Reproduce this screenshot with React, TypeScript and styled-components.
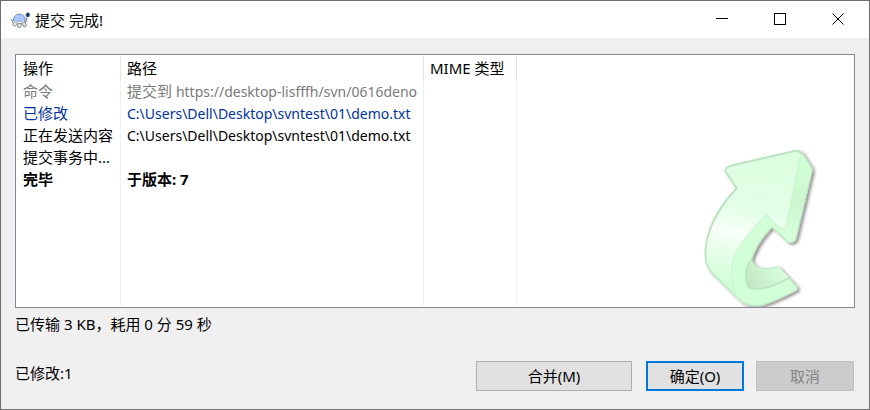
import React from "react";
import styled, { createGlobalStyle, css } from "styled-components";

const GlobalStyle = createGlobalStyle`
  * { box-sizing: border-box; }
  body {
    margin: 0;
    background: #f0f0f0;
    color: #000;
    font: 15px/22px "Noto Sans", "Noto Sans CJK SC", sans-serif;
  }
`;

const Window = styled.div`
  display: flex;
  flex-direction: column;
  min-height: 100vh;
  border: 1px solid #6e6e6f;
  background: #f0f0f0;
`;

const TitleBar = styled.header`
  display: flex;
  align-items: center;
  height: 37px;
  padding: 0 2px 0 9px;
  background: #fff;
`;

const Title = styled.h1`
  flex: 1;
  margin: 0 0 0 4px;
  font-size: 15px;
  font-weight: 400;
`;

const CaptionButton = styled.button`
  display: flex;
  align-items: center;
  justify-content: center;
  width: 58px;
  height: 35px;
  padding: 0 0 2px;
  border: 0;
  background: transparent;
`;

const Content = styled.main`
  display: flex;
  flex: 1;
  flex-direction: column;
  padding: 16px 14px 18px;
`;

const LogPanel = styled.section`
  position: relative;
  display: flex;
  flex: 1;
  padding: 1px 0;
  border: 1px solid #828790;
  background: #fff;
`;

const Watermark = styled.svg`
  position: absolute;
  right: 0;
  bottom: 0;
`;

const LogTable = styled.table`
  position: relative;
  width: 100%;
  table-layout: fixed;
  border-collapse: separate;
  border-spacing: 0;
`;

const Column = styled.col<{ $width?: number }>`
  ${({ $width }) => $width && css`width: ${$width}px;`}
`;

const HeadCell = styled.th`
  height: 24px;
  padding: 0 6px;
  border-right: 1px solid #e5e5e5;
  font-weight: 400;
  text-align: left;
  white-space: nowrap;
  &:first-child { padding-left: 7px; }
  &:last-child { border-right: 0; }
`;

type Tone = "muted" | "modified" | "plain" | "done";

const tones = {
  muted: css`color: #7a7a7a;`,
  modified: css`color: #0032a0;`,
  plain: css`color: #000;`,
  done: css`color: #000; font-weight: 700;`,
};

const Row = styled.tr<{ $tone: Tone }>`
  height: 22px;
  ${({ $tone }) => tones[$tone]}
`;

const FillRow = styled.tr`
  height: auto;
`;

const Cell = styled.td`
  padding: 0 6px;
  border-right: 1px solid #e8f2fd;
  white-space: nowrap;
  &:first-child { padding-left: 7px; }
  &:last-child { border-right: 0; }
`;

const Location = styled.span`
  font-size: 14px;
  line-height: 14px;
`;

const Status = styled.p`
  margin: 0;
  padding-top: 5px;
`;

const Footer = styled.footer`
  display: flex;
  align-items: center;
  margin-top: 26px;
  padding-right: 1px;
`;

const Summary = styled.output`
  flex: 1;
  padding-bottom: 7px;
`;

const DialogButton = styled.button<{ $wide?: boolean; $primary?: boolean }>`
  width: ${({ $wide }) => ($wide ? 156 : 98)}px;
  height: 30px;
  margin-left: ${({ $primary }) => ($primary ? 14 : 12)}px;
  padding: 0 0 1px;
  border: ${({ $primary }) => ($primary ? "2px solid #0078d7" : "1px solid #adadad")};
  background: #e1e1e1;
  color: #000;
  font: inherit;
  &:disabled {
    border-color: #bfbfbf;
    background: #ccc;
    color: #838383;
  }
`;

interface Entry {
  action: string;
  note?: string;
  location?: string;
  tone: Tone;
}

const entries: Entry[] = [
  { action: "命令", note: "提交到 ", location: "https://desktop-lisfffh/svn/0616deno", tone: "muted" },
  { action: "已修改", location: "C:\\Users\\Dell\\Desktop\\svntest\\01\\demo.txt", tone: "modified" },
  { action: "正在发送内容", location: "C:\\Users\\Dell\\Desktop\\svntest\\01\\demo.txt", tone: "plain" },
  { action: "提交事务中...", tone: "plain" },
  { action: "完毕", note: "于版本: 7", tone: "done" },
];

function TurtleIcon() {
  return (
    <svg width="21" height="18" viewBox="0 0 21 18" aria-hidden="true">
      <path d="M1 8.5 4.5 10M1 8 3 12" stroke="#8c9196" strokeWidth="1" fill="none" />
      <path d="M16.5 6.5c.5 3-.5 5-3.5 6.5l-8-1" stroke="#8c9196" strokeWidth="1.6" fill="none" />
      <path d="M4.500 10.500 2.500 13.500l2.500 2 2.500-3zM8 12l-.5 4 3 .5 1-3.500zM12 12l2 4 2.500-1-1.500-4z" fill="#e4e6e8" stroke="#8c9196" />
      <path d="M3.500 9C4 4.500 7 3 9.500 3c3 0 5.500 2 5.500 6.500-2 2.500-9 2.500-11.500-.5z" fill="#a9c4ff" stroke="#7387b8" />
      <path d="M5 10.500c3 1.500 6.500 1.500 9 0" stroke="#f4f6fa" fill="none" />
      <path d="M15 4.500c0-2 2-2.500 3.500-2.500 1.500.5 1.500 3 0 3.700-1.200.6-2.500.5-3.500-1.200z" fill="#9aa7b0" />
      <ellipse cx="18" cy="3.700" rx="1.700" ry="2.200" fill="#0d3851" />
    </svg>
  );
}

function CommitArrow() {
  return (
    <Watermark width="164" height="172" viewBox="0 0 492 516" aria-hidden="true">
      <defs>
        <linearGradient id="face" x1="180" y1="60" x2="115" y2="450" gradientUnits="userSpaceOnUse">
          <stop offset="0" stopColor="#dcffe0" />
          <stop offset=".42" stopColor="#e4ffe7" />
          <stop offset=".6" stopColor="#f8fff9" />
          <stop offset=".76" stopColor="#e5ffe9" />
          <stop offset="1" stopColor="#d0ffd6" />
        </linearGradient>
        <linearGradient id="side" x1="340" y1="80" x2="300" y2="320" gradientUnits="userSpaceOnUse">
          <stop offset="0" stopColor="#d0ffd5" />
          <stop offset=".5" stopColor="#ccf7d0" />
          <stop offset="1" stopColor="#d7ffdc" />
        </linearGradient>
        <linearGradient id="inside" x1="185" y1="455" x2="285" y2="400" gradientUnits="userSpaceOnUse">
          <stop offset="0" stopColor="#c2e8c6" />
          <stop offset="1" stopColor="#dbffdf" />
        </linearGradient>
        <linearGradient id="rim" x1="0" y1="320" x2="0" y2="500" gradientUnits="userSpaceOnUse">
          <stop offset="0" stopColor="#bde2c1" />
          <stop offset="1" stopColor="#c8eecc" />
        </linearGradient>
        <filter id="shadow" x="-20%" y="-20%" width="150%" height="150%">
          <feDropShadow dx="7" dy="5" stdDeviation="5" floodColor="#000" floodOpacity=".42" />
        </filter>
      </defs>
      <g strokeLinejoin="round" strokeLinecap="round">
        <path
          filter="url(#shadow)"
          fill="#d2ffd8"
          stroke="#bfe8c4"
          strokeWidth="4"
          d="M122 91 318 46Q329 45 338 57L362 95Q367 103 365 110L317 312Q310 326 294 321L246 276C218 304 195 340 184 374C190 400 216 407 266 396L319 455Q324 463 315 468C280 485 250 500 221 509C201 515 171 512 155 500L61 409C46 388 43 355 50 319C58 264 95 204 140 160L106 109Q104 97 122 91Z"
        />
        <path
          fill="url(#inside)"
          d="M184 378C186 404 221 408 266 396L298 428C262 448 216 471 180 459C165 451 160 413 184 378Z"
        />
        <path
          fill="url(#face)"
          d="M122 94 316 50Q331 48 331 68L288 275Q280 286 267 278L229 241C184 285 146 331 129 382C120 415 128 446 138 479L61 404C48 384 47 354 53 319C64 262 99 205 145 158L109 109Q107 99 122 94Z"
        />
        <path fill="url(#side)" d="M331 53 362 99 363 111 315 310Q308 321 293 317L240 262 229 241 267 278Q280 286 288 275L331 68Z" />
        <path
          fill="none"
          stroke="#c9f6ce"
          strokeWidth="4"
          d="M331 65 289 273Q281 287 267 278L229 241C190 276 142 332 129 382C121 412 124 454 141 485"
        />
        <path fill="none" stroke="#b7e6bd" strokeWidth="5" d="M184 374C163 400 163 443 178 458C215 472 263 448 297 428" />
        <path
          fill="none"
          stroke="url(#rim)"
          strokeWidth="5"
          d="M155 500 61 409C46 388 43 355 50 319C61 264 97 205 140 160L107 109Q104 98 122 93L316 48Q329 47 336 58"
        />
      </g>
    </Watermark>
  );
}

export default function App() {
  return (
    <>
      <GlobalStyle />
      <Window>
        <TitleBar>
          <TurtleIcon />
          <Title>提交 完成!</Title>
          <CaptionButton aria-label="最小化">
            <svg width="12" height="13" viewBox="0 0 12 13" shapeRendering="crispEdges">
              <path d="M0 6.500h12" stroke="#000" />
            </svg>
          </CaptionButton>
          <CaptionButton aria-label="最大化">
            <svg width="12" height="13" viewBox="0 0 12 13" shapeRendering="crispEdges">
              <path d="M.5 1.500h11v11H.5z" fill="none" stroke="#000" />
            </svg>
          </CaptionButton>
          <CaptionButton aria-label="关闭">
            <svg width="12" height="13" viewBox="0 0 12 13">
              <path d="m.5 1.500 11 11m0-11-11 11" fill="none" stroke="#000" />
            </svg>
          </CaptionButton>
        </TitleBar>
        <Content>
          <LogPanel>
            <CommitArrow />
            <LogTable>
              <colgroup>
                <Column $width={105} />
                <Column $width={303} />
                <Column $width={93} />
                <Column />
              </colgroup>
              <thead>
                <tr>
                  <HeadCell scope="col">操作</HeadCell>
                  <HeadCell scope="col">路径</HeadCell>
                  <HeadCell scope="col">MIME 类型</HeadCell>
                  <HeadCell as="td" />
                </tr>
              </thead>
              <tbody>
                {entries.map((entry) => (
                  <Row key={entry.action} $tone={entry.tone}>
                    <Cell>{entry.action}</Cell>
                    <Cell>
                      {entry.note}
                      {entry.location && <Location>{entry.location}</Location>}
                    </Cell>
                    <Cell />
                    <Cell />
                  </Row>
                ))}
                <FillRow>
                  <Cell />
                  <Cell />
                  <Cell />
                  <Cell />
                </FillRow>
              </tbody>
            </LogTable>
          </LogPanel>
          <Status>已传输 3 KB，耗用 0 分 59 秒</Status>
          <Footer>
            <Summary>已修改:1</Summary>
            <DialogButton $wide>合并(M)</DialogButton>
            <DialogButton $primary>确定(O)</DialogButton>
            <DialogButton disabled>取消</DialogButton>
          </Footer>
        </Content>
      </Window>
    </>
  );
}
